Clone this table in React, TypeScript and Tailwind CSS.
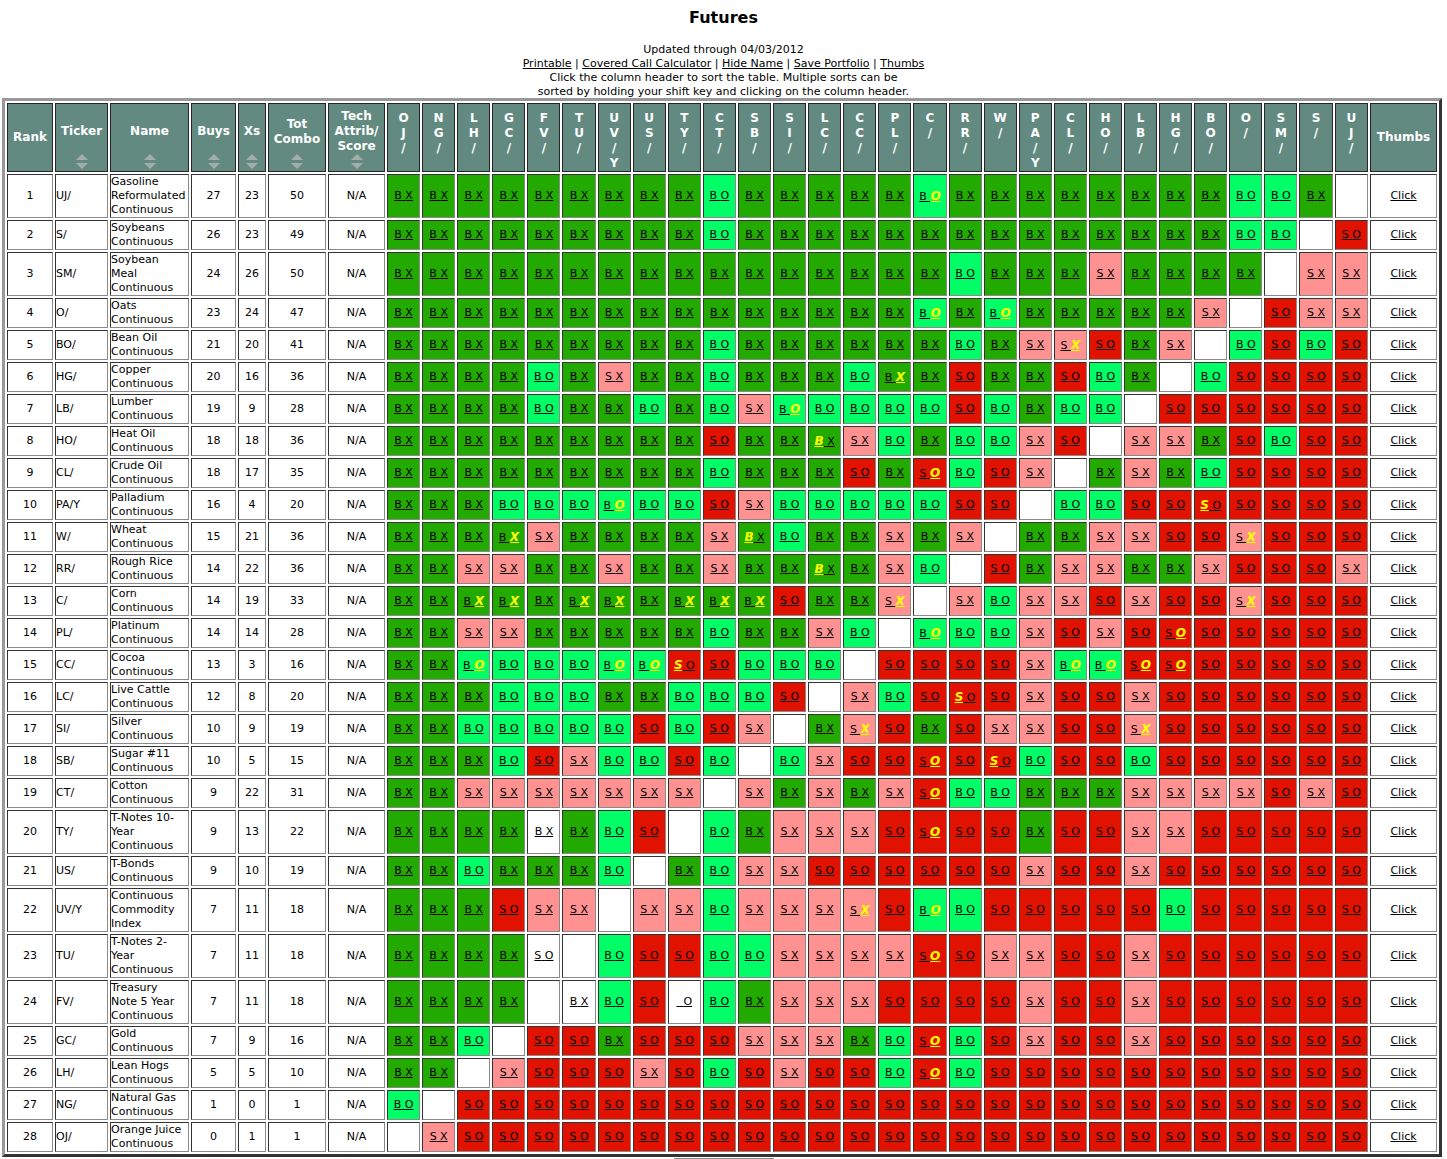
import React from 'react';

interface Row {
  ticker: string;
  name: string[];
  buys: number;
  xs: number;
  signals: string;
}

const COLS = ['OJ/', 'NG/', 'LH/', 'GC/', 'FV/', 'TU/', 'UV/Y', 'US/', 'TY/', 'CT/', 'SB/', 'SI/', 'LC/', 'CC/', 'PL/', 'C/', 'RR/', 'W/', 'PA/Y', 'CL/', 'HO/', 'LB/', 'HG/', 'BO/', 'O/', 'SM/', 'S/', 'UJ/'];

// one token per column: BX / BO / SX / SO, lowercase letter = yellow highlight, w = white cell, - = empty
const ROWS: Row[] = [
  { ticker: 'UJ/', name: ['Gasoline', 'Reformulated', 'Continuous'], buys: 27, xs: 23, signals: 'BX BX BX BX BX BX BX BX BX BO BX BX BX BX BX Bo BX BX BX BX BX BX BX BX BO BO BX -' },
  { ticker: 'S/', name: ['Soybeans', 'Continuous'], buys: 26, xs: 23, signals: 'BX BX BX BX BX BX BX BX BX BO BX BX BX BX BX BX BX BX BX BX BX BX BX BX BO BO - SO' },
  { ticker: 'SM/', name: ['Soybean', 'Meal', 'Continuous'], buys: 24, xs: 26, signals: 'BX BX BX BX BX BX BX BX BX BX BX BX BX BX BX BX BO BX BX BX SX BX BX BX BX - SX SX' },
  { ticker: 'O/', name: ['Oats', 'Continuous'], buys: 23, xs: 24, signals: 'BX BX BX BX BX BX BX BX BX BX BX BX BX BX BX Bo BX Bo BX BX BX BX BX SX - SO SX SX' },
  { ticker: 'BO/', name: ['Bean Oil', 'Continuous'], buys: 21, xs: 20, signals: 'BX BX BX BX BX BX BX BX BX BO BX BX BX BX BX BX BO BX SX Sx SO BX SX - BO SO BO SO' },
  { ticker: 'HG/', name: ['Copper', 'Continuous'], buys: 20, xs: 16, signals: 'BX BX BX BX BO BX SX BX BX BO BX BX BX BO Bx BX SO BX BX SO BO BX - BO SO SO SO SO' },
  { ticker: 'LB/', name: ['Lumber', 'Continuous'], buys: 19, xs: 9, signals: 'BX BX BX BX BO BX BX BO BX BO SX Bo BO BO BO BO SO BO BX BO BO - SO SO SO SO SO SO' },
  { ticker: 'HO/', name: ['Heat Oil', 'Continuous'], buys: 18, xs: 18, signals: 'BX BX BX BX BX BX BX BX BX SO BX BX bX SX BO BX BO BO SX SO - SX SX BX SO BO SO SO' },
  { ticker: 'CL/', name: ['Crude Oil', 'Continuous'], buys: 18, xs: 17, signals: 'BX BX BX BX BX BX BX BX BX BO BX BX BX SO BX So BO SO SX - BX SX BX BO SO SO SO SO' },
  { ticker: 'PA/Y', name: ['Palladium', 'Continuous'], buys: 16, xs: 4, signals: 'BX BX BX BO BO BO Bo BO BO SO SX BO BO BO BO BO SO SO - BO BO SO SO sO SO SO SO SO' },
  { ticker: 'W/', name: ['Wheat', 'Continuous'], buys: 15, xs: 21, signals: 'BX BX BX Bx SX BX BX BX BX SX bX BO BX BX SX BX SX - BX BX SX SX SO SO Sx SO SO SO' },
  { ticker: 'RR/', name: ['Rough Rice', 'Continuous'], buys: 14, xs: 22, signals: 'BX BX SX SX BX BX SX BX BX SX BX BX bX BX SX BO - SO BX SX SX BX BX SX SO SO SO SX' },
  { ticker: 'C/', name: ['Corn', 'Continuous'], buys: 14, xs: 19, signals: 'BX BX Bx Bx BX Bx Bx BX Bx Bx Bx SO BX BX Sx - SX BO SX SX SO SX SO SO Sx SO SO SO' },
  { ticker: 'PL/', name: ['Platinum', 'Continuous'], buys: 14, xs: 14, signals: 'BX BX SX SX BX BX BX BX BX BO BX BX SX BO - Bo BO BO SX SO SX SO So SO SO SO SO SO' },
  { ticker: 'CC/', name: ['Cocoa', 'Continuous'], buys: 13, xs: 3, signals: 'BX BX Bo BO BO BO Bo Bo sO SO BO BO BO - SO SO SO SO SX Bo Bo So So SO SO SO SO SO' },
  { ticker: 'LC/', name: ['Live Cattle', 'Continuous'], buys: 12, xs: 8, signals: 'BX BX BX BO BO BO BX BX BO BO BO SO - SX BO SO sO SO SX SO SO SX SO SO SO SO SO SO' },
  { ticker: 'SI/', name: ['Silver', 'Continuous'], buys: 10, xs: 9, signals: 'BX BX BO BO BO BO BO SO BO SO SX - BX Sx SO BX SO SX SX SO SO Sx SO SO SO SO SO SO' },
  { ticker: 'SB/', name: ['Sugar #11', 'Continuous'], buys: 10, xs: 5, signals: 'BX BX BX BO SO SX BO BO SO BO - BO SX SO SO So SO sO BO SO SO BO SO SO SO SO SO SO' },
  { ticker: 'CT/', name: ['Cotton', 'Continuous'], buys: 9, xs: 22, signals: 'BX BX SX SX SX SX SX SX SX - SX BX SX BX SX So BO BO BX BX BX SX SX SX SX SO SX SO' },
  { ticker: 'TY/', name: ['T-Notes 10-', 'Year', 'Continuous'], buys: 9, xs: 13, signals: 'BX BX BX BX wBX BX BO SO - BO BX SX SX SX SO So SO SO BX SO SO SX SX SO SO SO SO SO' },
  { ticker: 'US/', name: ['T-Bonds', 'Continuous'], buys: 9, xs: 10, signals: 'BX BX BO BX BX BX BO - BX BO SX SX SO SO SO SO SO SO SX SO SO SX SO SO SO SO SO SO' },
  { ticker: 'UV/Y', name: ['Continuous', 'Commodity', 'Index'], buys: 7, xs: 11, signals: 'BX BX BX SO SX SX - SX SX BO SX SX SX Sx SO Bo BO SO SO SO SO SO BO SO SO SO SO SO' },
  { ticker: 'TU/', name: ['T-Notes 2-', 'Year', 'Continuous'], buys: 7, xs: 11, signals: 'BX BX BX BX wSO - BO SO SO BO BO SX SX SX SX So SO SX SX SO SO SX SO SO SO SO SO SO' },
  { ticker: 'FV/', name: ['Treasury', 'Note 5 Year', 'Continuous'], buys: 7, xs: 11, signals: 'BX BX BX BX - wBX BO SO w_O BO BX SX SX SX SO SO SO SO SX SO SO SX SO SO SO SO SO SO' },
  { ticker: 'GC/', name: ['Gold', 'Continuous'], buys: 7, xs: 9, signals: 'BX BX BO - SO SO BX SO SO SO SX SX SX BX BO So BO SO SX SO SO SX SO SO SO SO SO SO' },
  { ticker: 'LH/', name: ['Lean Hogs', 'Continuous'], buys: 5, xs: 5, signals: 'BX BX - SX SO SO SO SX SO BO SO SX SO SO BO So BO SO SO SO SO SO SO SO SO SO SO SO' },
  { ticker: 'NG/', name: ['Natural Gas', 'Continuous'], buys: 1, xs: 0, signals: 'BO - SO SO SO SO SO SO SO SO SO SO SO SO SO SO SO SO SO SO SO SO SO SO SO SO SO SO' },
  { ticker: 'OJ/', name: ['Orange Juice', 'Continuous'], buys: 0, xs: 1, signals: '- SX SO SO SO SO SO SO SO SO SO SO SO SO SO SO SO SO SO SO SO SO SO SO SO SO SO SO' },
];

const BG: Record<string, string> = {
  BX: 'bg-[#22aa00]',
  BO: 'bg-[#00ff66]',
  SX: 'bg-[#ff9191]',
  SO: 'bg-[#e11200]',
};

const TD = 'border border-t-[#333] border-l-[#333] border-r-[#8a8a8a] border-b-[#8a8a8a] p-0 align-middle';
const TH = 'bg-[#638a81] text-white font-bold text-[12px] leading-[15px] border border-[#262626] p-0';

function SortArrows() {
  return (
    <svg className="absolute bottom-[2px] left-1/2 -translate-x-1/2" width="12" height="15" viewBox="0 0 12 15">
      <polygon points="0,6 6,0 12,6" fill="#a3aeab" />
      <polygon points="0,9 12,9 6,15" fill="#a3aeab" />
    </svg>
  );
}

function Letter({ ch }: { ch: string }) {
  if (ch === '_') return <span className="underline">{'\u00a0'}</span>;
  if (ch !== ch.toUpperCase()) {
    return <span className="underline italic font-bold text-[12px] text-[#ffff00]">{ch.toUpperCase()}</span>;
  }
  return <span className="underline">{ch}</span>;
}

function SignalCell({ code }: { code: string }) {
  if (code === '-') return <td className={`${TD} bg-white`} />;
  const plain = code.startsWith('w');
  const c = plain ? code.slice(1) : code;
  const bg = plain ? 'bg-white' : BG[c.toUpperCase()];
  return (
    <td className={`${TD} ${bg} text-center`}>
      <a href="#" className="text-black">
        <Letter ch={c[0]} />
        <span className="underline"> </span>
        <Letter ch={c[1]} />
      </a>
    </td>
  );
}

export default function App() {
  return (
    <div className="min-h-screen bg-white text-black font-['DejaVu_Sans',Verdana,sans-serif]">
      <h3 className="pt-[8px] text-center text-[16px] leading-[20px] font-bold">Futures</h3>

      <div className="mt-[15px] text-center text-[11px] leading-[14px]">
        <div>Updated through 04/03/2012</div>
        <div>
          <a href="#" className="underline">Printable</a> |{' '}
          <a href="#" className="underline">Covered Call Calculator</a> |{' '}
          <a href="#" className="underline">Hide Name</a> |{' '}
          <a href="#" className="underline">Save Portfolio</a> |{' '}
          <a href="#" className="underline">Thumbs</a>
        </div>
        <div>Click the column header to sort the table. Multiple sorts can be</div>
        <div>sorted by holding your shift key and clicking on the column header.</div>
      </div>

      <table className="-mt-px ml-[2px] w-[1440px] table-fixed border-separate border-spacing-[2px] border-[3px] border-t-[#999] border-l-[#999] border-r-[#333] border-b-[#333] bg-white text-[11px] leading-[14px]">
        <thead>
          <tr>
            <th className={`${TH} w-[46px] h-[69px] align-middle`}>Rank</th>
            <th className={`${TH} relative w-[53px] align-middle pb-[12px]`}>Ticker<SortArrows /></th>
            <th className={`${TH} relative w-[79px] align-middle pb-[12px]`}>Name<SortArrows /></th>
            <th className={`${TH} relative w-[45px] align-middle pb-[12px]`}>Buys<SortArrows /></th>
            <th className={`${TH} relative w-[28px] align-middle pb-[12px]`}>Xs<SortArrows /></th>
            <th className={`${TH} relative w-[58px] align-middle pb-[12px]`}>Tot<br />Combo<SortArrows /></th>
            <th className={`${TH} relative w-[57px] align-middle pb-[12px]`}>Tech<br />Attrib/<br />Score<SortArrows /></th>
            {COLS.map(col => (
              <th key={col} className={`${TH} align-top pt-[7px] leading-[13px]`}>
                {col.split('').map((ch, i) => (
                  <div key={i}>{ch}</div>
                ))}
              </th>
            ))}
            <th className={`${TH} w-[67px] align-middle`}>Thumbs</th>
          </tr>
        </thead>
        <tbody>
          {ROWS.map((row, ri) => (
            <tr key={row.ticker}>
              <td className={`${TD} bg-white text-center`}>{ri + 1}</td>
              <td className={`${TD} bg-white text-left`}>{row.ticker}</td>
              <td className={`${TD} bg-white text-left whitespace-nowrap`}>
                {row.name.map((line, i) => (
                  <div key={i}>{line}</div>
                ))}
              </td>
              <td className={`${TD} bg-white text-center`}>{row.buys}</td>
              <td className={`${TD} bg-white text-center`}>{row.xs}</td>
              <td className={`${TD} bg-white text-center`}>{row.buys + row.xs}</td>
              <td className={`${TD} bg-white text-center`}>N/A</td>
              {row.signals.split(' ').map((code, ci) => (
                <SignalCell key={ci} code={code} />
              ))}
              <td className={`${TD} bg-white text-center`}>
                <a href="#" className="underline">Click</a>
              </td>
            </tr>
          ))}
        </tbody>
      </table>

      <div className="mx-auto mt-px w-[100px] h-[8px] border border-b-0 border-[#888] bg-[#c4dede]" />
    </div>
  );
}
